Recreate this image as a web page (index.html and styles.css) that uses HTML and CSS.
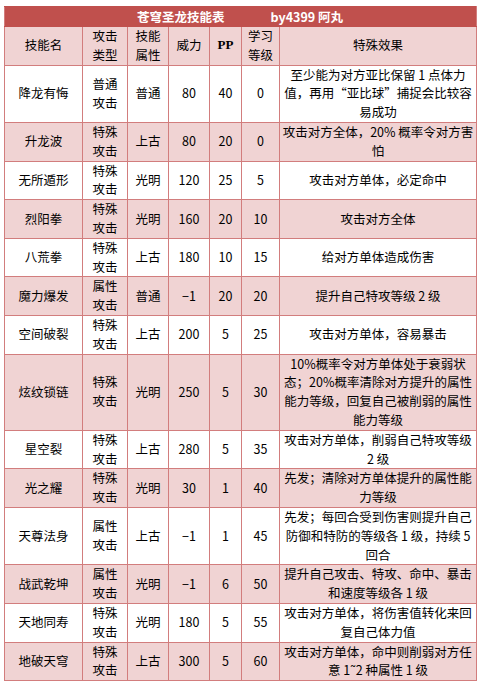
FILE: index.html
```html
<!DOCTYPE html>
<html lang="zh-CN">
<head>
<meta charset="utf-8">
<title>苍穹圣龙技能表</title>
<link rel="stylesheet" href="styles.css">
</head>
<body>
<div class="page">
<table class="skills">
  <colgroup>
    <col class="c-name"><col class="c-type"><col class="c-attr"><col class="c-pow"><col class="c-pp"><col class="c-lv"><col class="c-eff">
  </colgroup>
  <thead>
    <tr class="title-row"><th colspan="7"><span class="title-main">苍穹圣龙技能表</span><span class="title-by">by4399 阿丸</span></th></tr>
    <tr class="head-row">
      <th>技能名</th><th>攻击<br>类型</th><th>技能<br>属性</th><th>威力</th><th class="pp">PP</th><th>学习<br>等级</th><th>特殊效果</th>
    </tr>
  </thead>
  <tbody>
    <tr><td>降龙有悔</td><td>普通<br>攻击</td><td>普通</td><td>80</td><td>40</td><td>0</td><td class="eff">至少能为对方亚比保留 1 点体力<br>值，再用“亚比球”捕捉会比较容<br>易成功</td></tr>
    <tr><td>升龙波</td><td>特殊<br>攻击</td><td>上古</td><td>80</td><td>20</td><td>0</td><td class="eff">攻击对方全体，20% 概率令对方害<br>怕</td></tr>
    <tr><td>无所遁形</td><td>特殊<br>攻击</td><td>光明</td><td>120</td><td>25</td><td>5</td><td class="eff">攻击对方单体，必定命中</td></tr>
    <tr><td>烈阳拳</td><td>特殊<br>攻击</td><td>光明</td><td>160</td><td>20</td><td>10</td><td class="eff">攻击对方全体</td></tr>
    <tr><td>八荒拳</td><td>特殊<br>攻击</td><td>上古</td><td>180</td><td>10</td><td>15</td><td class="eff">给对方单体造成伤害</td></tr>
    <tr><td>魔力爆发</td><td>属性<br>攻击</td><td>普通</td><td>−1</td><td>20</td><td>20</td><td class="eff">提升自己特攻等级 2 级</td></tr>
    <tr><td>空间破裂</td><td>特殊<br>攻击</td><td>上古</td><td>200</td><td>5</td><td>25</td><td class="eff">攻击对方单体，容易暴击</td></tr>
    <tr><td>炫纹锁链</td><td>特殊<br>攻击</td><td>光明</td><td>250</td><td>5</td><td>30</td><td class="eff">10%概率令对方单体处于衰弱状<br>态；20%概率清除对方提升的属性<br>能力等级，回复自己被削弱的属性<br>能力等级</td></tr>
    <tr><td>星空裂</td><td>特殊<br>攻击</td><td>上古</td><td>280</td><td>5</td><td>35</td><td class="eff">攻击对方单体，削弱自己特攻等级<br>2 级</td></tr>
    <tr><td>光之耀</td><td>特殊<br>攻击</td><td>光明</td><td>30</td><td>1</td><td>40</td><td class="eff">先发；清除对方单体提升的属性能<br>力等级</td></tr>
    <tr><td>天尊法身</td><td>属性<br>攻击</td><td>上古</td><td>−1</td><td>1</td><td>45</td><td class="eff">先发；每回合受到伤害则提升自己<br>防御和特防的等级各 1 级，持续 5<br>回合</td></tr>
    <tr><td>战武乾坤</td><td>属性<br>攻击</td><td>光明</td><td>−1</td><td>6</td><td>50</td><td class="eff">提升自己攻击、特攻、命中、暴击<br>和速度等级各 1 级</td></tr>
    <tr><td>天地同寿</td><td>特殊<br>攻击</td><td>光明</td><td>180</td><td>5</td><td>55</td><td class="eff">攻击对方单体，将伤害值转化来回<br>复自己体力值</td></tr>
    <tr><td>地破天穹</td><td>特殊<br>攻击</td><td>上古</td><td>300</td><td>5</td><td>60</td><td class="eff">攻击对方单体，命中则削弱对方任<br>意 1˜2 种属性 1 级</td></tr>
  </tbody>
</table>
</div>
</body>
</html>
```
FILE: styles.css
```css
html, body {
  margin: 0;
  padding: 0;
  background: #ffffff;
}
.page {
  padding: 6px 0 0 4px;
}
.skills {
  border-collapse: collapse;
  table-layout: fixed;
  width: 472px;
  font-family: "Noto Sans CJK SC", "Noto Sans", sans-serif;
  font-size: 12.5px;
  color: #000;
}
.c-name { width: 78px; }
.c-type { width: 45px; }
.c-attr { width: 41px; }
.c-pow { width: 41px; }
.c-pp { width: 32px; }
.c-lv { width: 38px; }
.c-eff { width: 197px; }
.skills th, .skills td {
  border: 1px solid #d27d7d;
  padding: 0;
  text-align: center;
  vertical-align: middle;
  font-weight: normal;
  line-height: 18.8px;
}
.title-row th {
  background: #c0504d;
  border-color: #c0504d #d27d7d;
  color: #fff;
  font-weight: bold;
  height: 19px;
  line-height: 19px;
  font-size: 12.5px;
}
.title-main {
  display: inline-block;
  transform: translateX(-1px);
}
.title-by {
  display: inline-block;
  margin-left: 45px;
}
.head-row th {
  background: #f0d3d3;
}
.head-row th.pp {
  font-family: "Liberation Serif", serif;
  font-weight: bold;
  font-size: 13px;
}
.skills tbody tr:nth-child(even) td {
  background: #f0d3d3;
}
.skills tbody tr:nth-child(odd) td {
  background: #ffffff;
}
.skills td.eff {
  white-space: nowrap;
  overflow: hidden;
}
```
